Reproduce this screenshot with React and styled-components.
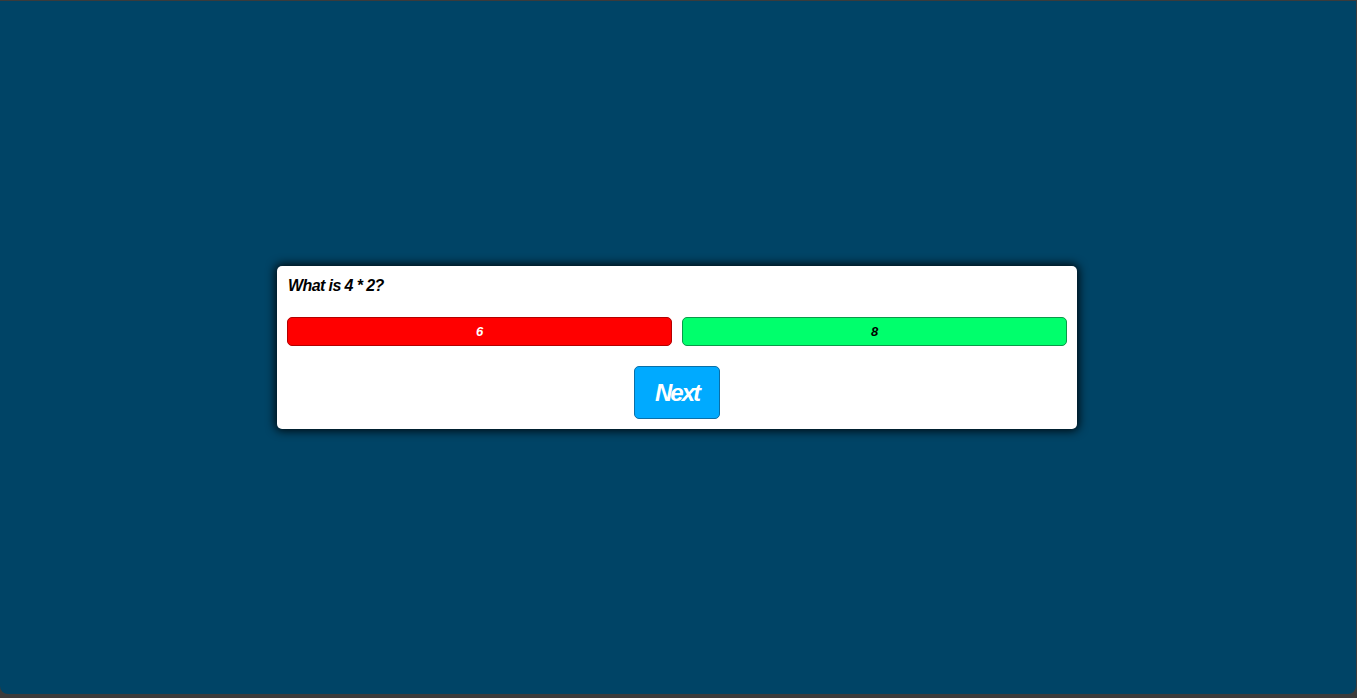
import styled, { createGlobalStyle } from 'styled-components';

const GlobalStyle = createGlobalStyle`
  html, body {
    margin: 0;
    padding: 0;
    height: 100%;
    background: #3b3b3b;
  }
  #root {
    height: 100%;
  }
`;

const question = {
  text: 'What is 4 * 2?',
  answers: [
    { label: '6', correct: false },
    { label: '8', correct: true },
  ],
};

const App = () => {
  return (
    <>
      <GlobalStyle />
      <Screen>
        <QuizCard>
          <Question>{question.text}</Question>
          <AnswerGrid>
            {question.answers.map((a) => (
              <AnswerButton key={a.label} correct={a.correct ? 1 : 0}>
                {a.label}
              </AnswerButton>
            ))}
          </AnswerGrid>
          <Controls>
            <NextButton>Next</NextButton>
          </Controls>
        </QuizCard>
      </Screen>
    </>
  );
};

export default App;

const Screen = styled.div`
  box-sizing: border-box;
  height: calc(100% - 5px);
  margin: 1px 1px 4px 0;
  padding-right: 2px;
  background-color: #004466;
  border-radius: 0 0 8px 8px;
  display: flex;
  justify-content: center;
  align-items: center;
  font-family: 'Liberation Sans', Arial, sans-serif;
`;

const QuizCard = styled.div`
  width: 800px;
  box-sizing: border-box;
  padding: 10px;
  background-color: #fff;
  border-radius: 5px;
  box-shadow: 0 0 10px 2px rgba(0, 0, 0, 0.85);
`;

const Question = styled.h2`
  margin: 0;
  padding-left: 1px;
  font-size: 16px;
  line-height: 20px;
  font-weight: 700;
  font-style: italic;
  letter-spacing: -0.6px;
  color: #000;
`;

const AnswerGrid = styled.div`
  display: grid;
  grid-template-columns: repeat(2, 1fr);
  gap: 10px;
  margin: 21px 0 20px;
`;

const AnswerButton = styled.button`
  height: 29px;
  border: 1px solid ${({ correct }) => (correct ? '#0a9a4a' : '#b30000')};
  border-radius: 5px;
  background-color: ${({ correct }) => (correct ? '#00ff6c' : '#ff0000')};
  color: ${({ correct }) => (correct ? '#000' : '#fff')};
  font-family: inherit;
  font-size: 13px;
  font-weight: 700;
  font-style: italic;
  padding: 0;
  cursor: pointer;
`;

const Controls = styled.div`
  display: flex;
  justify-content: center;
`;

const NextButton = styled.button`
  width: 86px;
  height: 53px;
  border: 1px solid #0a6fa8;
  border-radius: 5px;
  background-color: #00aaff;
  color: #fff;
  font-family: inherit;
  font-size: 24px;
  font-weight: 700;
  font-style: italic;
  letter-spacing: -2px;
  padding: 0;
  cursor: pointer;
`;
